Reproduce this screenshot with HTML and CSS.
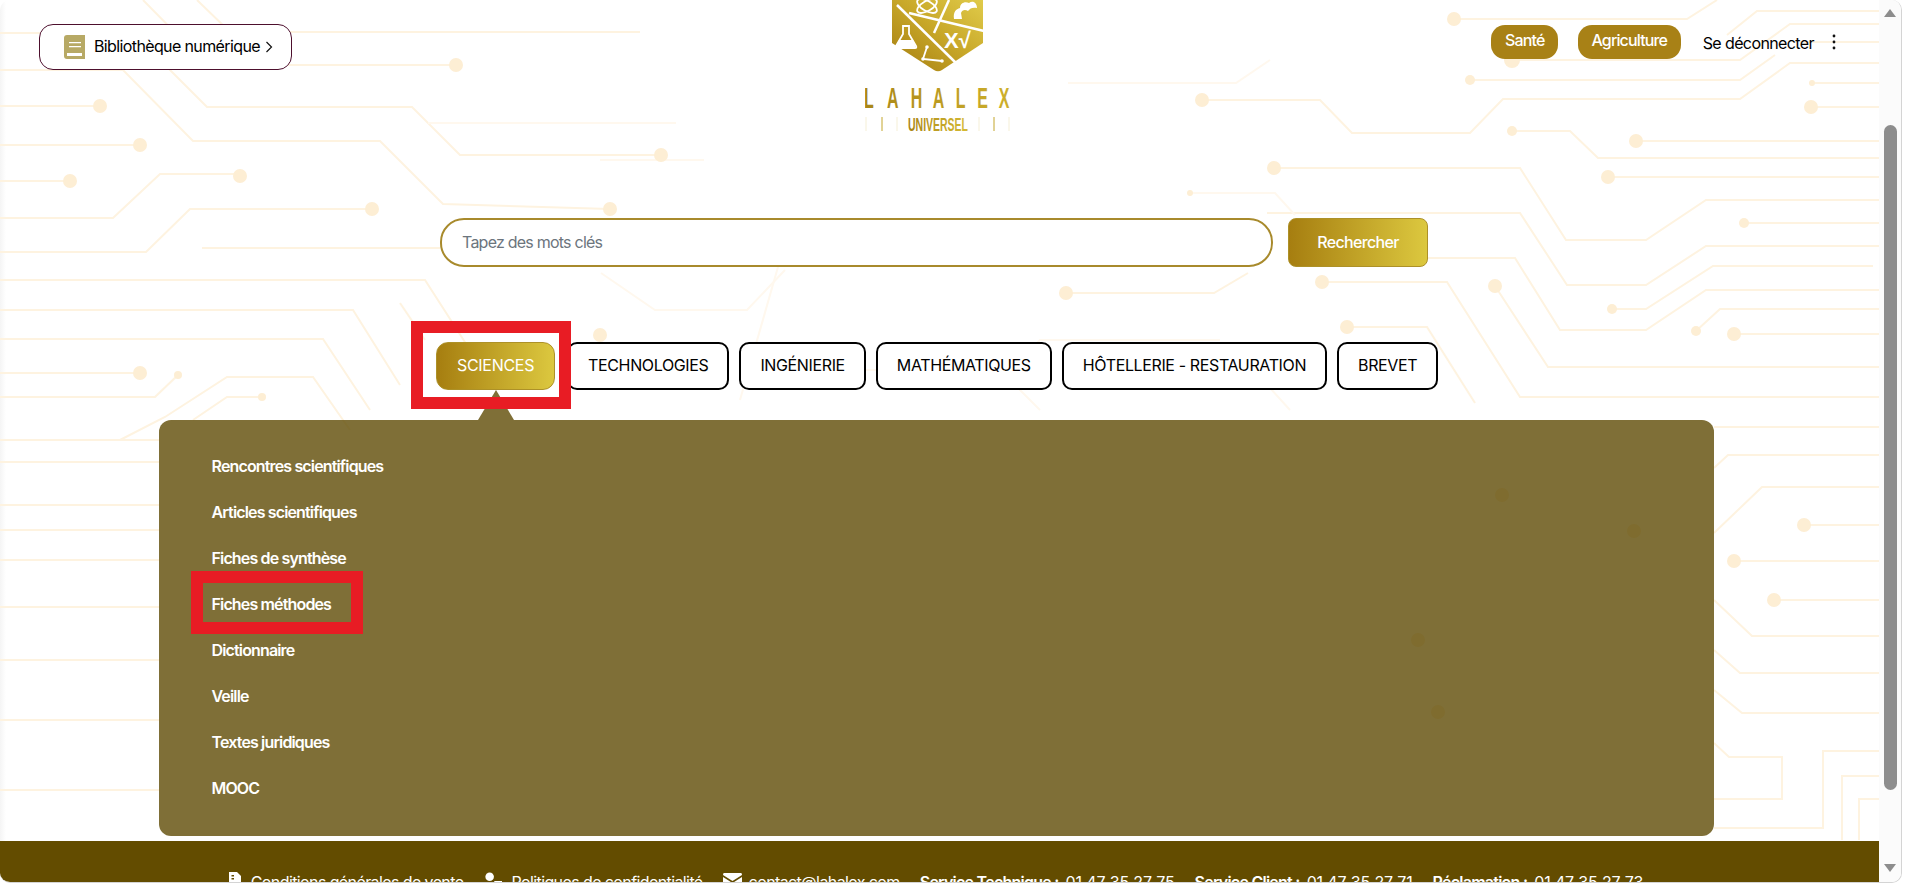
FILE: index.html

```html
<!DOCTYPE html>
<html lang="fr">
<head>
  <meta charset="UTF-8" />
  <meta name="viewport" content="width=device-width, initial-scale=1.0"/>
  <title>Lahalex Universel</title>
  <link rel="stylesheet" href="styles.css">
</head>
<body>
  <div class="window">
    <div class="page">
      <svg class="circuit" viewBox="0 0 1879 882" aria-hidden="true">
        <g class="traces">
          <path d="M0 33H135L143 41"/>
          <path d="M143 0L207 65H456"/>
          <path d="M197 0L230 32H640"/>
          <path d="M0 70H123L193 141H380L443 204L610 209"/>
          <path d="M165 65L207 107H412L460 155H661"/>
          <path d="M0 106H100"/>
          <path d="M0 145H140"/>
          <path d="M0 181H70"/>
          <path d="M0 218H113L160 174H240"/>
          <path d="M0 252H146L190 209H372"/>
          <path d="M202 248H440"/>
          <path d="M0 280H425L470 350"/>
          <path d="M0 310H353L400 385"/>
          <path d="M0 339H323L370 410"/>
          <path d="M400 303L425 340"/>
          <path d="M0 373H140"/>
          <path d="M178 375L155 397H0"/>
          <path d="M120 440L165 417L227 377H313L350 430"/>
          <path d="M193 420L227 397H262"/>
          <path d="M0 440H159M0 462H159M0 505H159M0 530H159M0 560H159M0 607H159M0 660H159M0 720H159M0 790H159"/>
          <path d="M1454 19H1687L1717 0"/>
          <path d="M1727 35L1757 11H1880"/>
          <path d="M1512 60H1740L1790 24H1880"/>
          <path d="M1800 42H1880"/>
          <path d="M1202 100H1320L1352 133H1470L1503 99H1740L1790 63H1880"/>
          <path d="M1470 80H1740L1775 55"/>
          <path d="M1811 107H1880"/>
          <path d="M1812 83H1880"/>
          <path d="M1512 131H1570L1598 158H1880"/>
          <path d="M1636 141H1880"/>
          <path d="M1608 177H1880"/>
          <path d="M1274 168H1520L1566 240H1646L1706 200H1880"/>
          <path d="M1267 213H1520L1567 285H1646L1706 246H1880"/>
          <path d="M1428 258H1515L1560 330H1646L1706 290H1880"/>
          <path d="M1612 309H1646L1713 266H1873"/>
          <path d="M1744 223H1880"/>
          <path d="M1322 282H1447L1520 397H1880"/>
          <path d="M1495 286L1548 367H1880"/>
          <path d="M1347 327H1427L1475 403"/>
          <path d="M1696 331L1720 309H1880"/>
          <path d="M1734 334H1880"/>
          <path d="M1714 427H1880"/>
          <path d="M1714 468L1728 455H1880"/>
          <path d="M1714 533L1762 487H1880"/>
          <path d="M1804 525H1880"/>
          <path d="M1734 561H1880"/>
          <path d="M1774 600H1880"/>
          <path d="M1714 600L1752 636H1880"/>
          <path d="M1714 650L1740 673H1880"/>
          <path d="M1714 690L1742 713H1880"/>
          <path d="M1714 743L1729 757H1782V799H1714"/>
          <path d="M1714 828H1823V751H1880"/>
          <path d="M1842 840V776H1880"/>
          <path d="M1859 840V799H1880"/>
          <path d="M1066 293H1214L1248 273"/>
        </g>
        <g class="traces faint">
          <path d="M428 123H676"/>
          <path d="M1068 83H1236L1270 60"/>
          <path d="M600 160H704"/>
          <path d="M601 273L655 310H747L785 270"/>
          <path d="M780 260L740 400"/>
          <path d="M1190 193H1275L1295 215"/>
          <path d="M820 370H1000L1040 410"/>
          <path d="M1100 355H1240L1290 410"/>
          <path d="M1000 380L1040 340H1220"/>
        </g>
        <g class="pads">
          <circle cx="456" cy="65" r="7"/><circle cx="100" cy="106" r="7"/>
          <circle cx="140" cy="145" r="7"/><circle cx="70" cy="181" r="7"/>
          <circle cx="240" cy="176" r="7"/><circle cx="372" cy="209" r="7"/>
          <circle cx="140" cy="373" r="7"/><circle cx="178" cy="375" r="4"/>
          <circle cx="262" cy="397" r="4"/><circle cx="661" cy="155" r="7"/>
          <circle cx="610" cy="209" r="7"/><circle cx="600" cy="335" r="7"/>
          <circle cx="1454" cy="19" r="7"/><circle cx="1512" cy="60" r="8"/>
          <circle cx="1470" cy="80" r="5"/><circle cx="1811" cy="107" r="7"/>
          <circle cx="1812" cy="83" r="3"/><circle cx="1512" cy="131" r="5"/>
          <circle cx="1636" cy="141" r="7"/><circle cx="1608" cy="177" r="7"/>
          <circle cx="1744" cy="223" r="5"/><circle cx="1202" cy="100" r="7"/>
          <circle cx="1274" cy="168" r="7"/><circle cx="1066" cy="293" r="7"/>
          <circle cx="1322" cy="282" r="7"/><circle cx="1347" cy="327" r="7"/>
          <circle cx="1495" cy="286" r="7"/><circle cx="1612" cy="309" r="5"/>
          <circle cx="1696" cy="331" r="5"/><circle cx="1734" cy="334" r="7"/>
          <circle cx="1804" cy="525" r="7"/><circle cx="1734" cy="561" r="7"/>
          <circle cx="1774" cy="600" r="7"/><circle cx="1190" cy="193" r="3"/>
          <circle cx="1502" cy="495" r="7"/><circle cx="1634" cy="531" r="7"/>
          <circle cx="1418" cy="640" r="7"/><circle cx="1438" cy="712" r="7"/>
        </g>
      </svg>

      <header class="topbar">
        <div class="topbar-left">
          <a class="library-link" href="#">
            <svg class="book-icon" viewBox="0 0 21 24" aria-hidden="true">
              <path fill="#b7a965" d="M3 0H21V24H3Q0 24 0 21V3Q0 0 3 0Z"/>
              <path fill="#fff" d="M5 7H17V8.200H5ZM5 11H17V12.200H5ZM3 18H18V21H3Z"/>
            </svg>
            <span class="library-label">Bibliothèque numérique</span>
            <svg class="chevron" viewBox="0 0 8 12" aria-hidden="true"><path d="M1.500 1L6.500 6L1.500 11"/></svg>
          </a>
        </div>

        <svg class="logo" viewBox="0 0 146 131" role="img" aria-label="Lahalex Universel">
          <defs>
            <linearGradient id="goldShield" x1="0" y1="1" x2="1" y2="0">
              <stop offset="0" stop-color="#a47c10"/>
              <stop offset=".55" stop-color="#c9a92a"/>
              <stop offset="1" stop-color="#e0cb4a"/>
            </linearGradient>
            <linearGradient id="goldText" gradientUnits="userSpaceOnUse" x1="0" y1="0" x2="260" y2="0">
              <stop offset="0" stop-color="#a98618"/>
              <stop offset="1" stop-color="#cdaf2c"/>
            </linearGradient>
            <linearGradient id="goldSub" x1="0" y1="0" x2="1" y2="0">
              <stop offset="0" stop-color="#a88416"/>
              <stop offset="1" stop-color="#d6bb35"/>
            </linearGradient>
          </defs>
          <path fill="url(#goldShield)" d="M27 0H118V43L77 70Q73 72.500 69 70L27 43Z"/>
          <g class="shield-lines">
            <path d="M32 5L91 63"/>
            <path d="M44 13L119 31"/>
            <path d="M84 0L69 33"/>
          </g>
          <g class="shield-icons">
            <ellipse cx="62" cy="6" rx="11" ry="5" transform="rotate(30 62 6)"/>
            <ellipse cx="62" cy="6" rx="11" ry="5" transform="rotate(-30 62 6)"/>
            <path d="M38 26H44V34L51 46Q52 48 50 48H32Q30 48 31 46L38 34Z"/>
            <path d="M62 47L58 59L77 61"/>
          </g>
          <path class="shield-gear" d="M89 19C88 12 91 9 95 8C95 3 100 1 104 3C108 0 112 3 112 8C108 7 105 8 103 11C100 9 97 10 96 13L97 19Z"/>
          <path fill="#fff" d="M34 40H48L51 48H31Z"/>
          <circle class="shield-dot" cx="62" cy="47" r="1.800"/>
          <circle class="shield-dot" cx="58" cy="59" r="1.800"/>
          <circle class="shield-dot" cx="77" cy="61" r="1.800"/>
          <text class="shield-math" x="79" y="48">X√</text>
          <g transform="scale(.55 1)">
            <text class="logo-name" x="-2 40 83 123 165 204 243" y="108" fill="url(#goldText)">LAHALEX</text>
          </g>
          <text class="logo-sub" x="43" y="131" textLength="60" lengthAdjust="spacingAndGlyphs" fill="url(#goldSub)">UNIVERSEL</text>
          <path class="tick" d="M17 117V131M129 117V131"/>
          <path class="tick pale" d="M1 117V131M32 117V131M114 117V131M144 117V131"/>
        </svg>

        <nav class="topbar-right">
          <a class="pill" href="#">Santé</a>
          <a class="pill" href="#">Agriculture</a>
          <a class="logout" href="#">Se déconnecter</a>
          <svg class="kebab" viewBox="0 0 4 16" aria-hidden="true">
            <circle cx="2" cy="2" r="1.400"/><circle cx="2" cy="8" r="1.400"/><circle cx="2" cy="14" r="1.400"/>
          </svg>
        </nav>
      </header>

      <section class="search-row">
        <input class="search-input" type="text" placeholder="Tapez des mots clés">
        <button class="search-button" type="button">Rechercher</button>
      </section>

      <nav class="tabs">
        <a class="tab active" href="#">SCIENCES<span class="mark mark-tab"></span></a>
        <a class="tab" href="#">TECHNOLOGIES</a>
        <a class="tab" href="#">INGÉNIERIE</a>
        <a class="tab" href="#">MATHÉMATIQUES</a>
        <a class="tab" href="#">HÔTELLERIE - RESTAURATION</a>
        <a class="tab" href="#">BREVET</a>
      </nav>

      <section class="menu-panel">
        <a class="menu-item" href="#">Rencontres scientifiques</a>
        <a class="menu-item" href="#">Articles scientifiques</a>
        <a class="menu-item" href="#">Fiches de synthèse</a>
        <a class="menu-item" href="#">Fiches méthodes<span class="mark mark-item"></span></a>
        <a class="menu-item" href="#">Dictionnaire</a>
        <a class="menu-item" href="#">Veille</a>
        <a class="menu-item" href="#">Textes juridiques</a>
        <a class="menu-item" href="#">MOOC</a>
      </section>

      <footer class="site-footer">
        <span class="foot-item roomy">
          <svg class="foot-icon" viewBox="0 0 14 18" aria-hidden="true"><path d="M1 0H9L13 4V18H1ZM3.500 6V7.500H6V6ZM3.500 3V4.500H6V3Z" fill-rule="evenodd"/></svg>
          Conditions générales de vente
        </span>
        <span class="foot-item roomy">
          <svg class="foot-icon wide" viewBox="0 0 20 18" aria-hidden="true"><circle cx="7" cy="4.500" r="4.500"/><path d="M0 18C0 12 3 10 7 10C9 10 10 11 11 12L9 18ZM12 9H20V18H10Z"/></svg>
          Politiques de confidentialité
        </span>
        <span class="foot-item">
          <svg class="foot-icon wide" viewBox="0 0 19 16" aria-hidden="true"><path d="M1 0H18Q19 0 19 2L9.500 8L0 2Q0 0 1 0ZM0 4L9.500 10L19 4V16H0Z"/></svg>
          contact@lahalex.com
        </span>
        <span class="foot-item"><b>Service Technique :</b> <span class="foot-num">01 47 35 27 75</span></span>
        <span class="foot-item"><b>Service Client :</b> <span class="foot-num">01 47 35 27 71</span></span>
        <span class="foot-item"><b>Réclamation :</b> <span class="foot-num">01 47 35 27 73</span></span>
      </footer>
    </div>

    <div class="scrollbar">
      <span class="arrow arrow-up"></span>
      <span class="thumb"></span>
      <span class="arrow arrow-down"></span>
    </div>
  </div>
</body>
</html>
```

FILE: styles.css

```css
* {
  box-sizing: border-box;
}
html, body {
  margin: 0;
  height: 100%;
  overflow: hidden;
  background-color: #fff;
}
body {
  font-family: Inter, "Liberation Sans", sans-serif;
  font-size: 16px;
  color: #000;
}
a {
  color: inherit;
  text-decoration: none;
}

.window {
  display: flex;
  width: 1902px;
  height: 883px;
  border-right: 1px solid #d4d4d4;
  border-bottom: 1px solid #d4d4d4;
  border-radius: 10px;
  overflow: hidden;
}
.page {
  position: relative;
  width: 1879px;
  height: 882px;
  overflow: hidden;
  background: linear-gradient(to right, #f5f5f5, #fff 6px);
}
.circuit {
  position: absolute;
  top: 0;
  left: 0;
  width: 1879px;
  height: 882px;
}
.traces path {
  fill: none;
  stroke: #fef3e0;
  stroke-width: 2;
}
.traces.faint path {
  stroke: #fff8ee;
}
.pads circle {
  fill: #fdeed4;
}

/* top bar */
.topbar {
  position: relative;
  display: grid;
  grid-template-columns: 1fr 146px 1fr;
  align-items: start;
  height: 218px;
  padding: 0 43px 0 39px;
}
.library-link {
  display: inline-flex;
  align-items: center;
  width: 253px;
  height: 46px;
  margin-top: 24px;
  padding-left: 24px;
  background-color: #fff;
  border: 1px solid #4d0f2d;
  border-radius: 14px;
  letter-spacing: -0.62px;
}
.library-label {
  padding-bottom: 2px;
}
.book-icon {
  width: 21px;
  height: 24px;
  margin-right: 9px;
}
.chevron {
  width: 8px;
  height: 12px;
  margin-left: 5px;
  fill: none;
  stroke: #111;
  stroke-width: 1.2;
}
.logo {
  display: block;
  width: 146px;
  height: 131px;
}
.shield-lines path {
  fill: none;
  stroke: #fff;
  stroke-width: 2.5;
}
.shield-icons > * {
  fill: none;
  stroke: #fff;
  stroke-width: 1.8;
}
.shield-gear,
.shield-dot {
  fill: #fff;
}
.shield-math {
  font-family: "Liberation Sans", sans-serif;
  font-size: 22px;
  font-weight: 700;
  fill: #fff;
}
.logo-name {
  font-family: "Liberation Sans", sans-serif;
  font-size: 29px;
  font-weight: 700;
}
.logo-sub {
  font-family: "Liberation Sans", sans-serif;
  font-size: 19px;
  font-weight: 700;
}
.tick {
  fill: none;
  stroke: #c3a62c;
  stroke-width: 1;
}
.tick.pale {
  stroke: #f5efd6;
}
.topbar-right {
  display: flex;
  align-items: center;
  justify-content: flex-end;
  margin-top: 25px;
}
.pill {
  display: flex;
  align-items: center;
  justify-content: center;
  height: 34px;
  margin-right: 20px;
  padding: 0 13.500px 4px;
  background-color: #a88116;
  border-radius: 14px;
  color: #fff;
  font-weight: 500;
  letter-spacing: -0.85px;
}
.pill + .logout {
  margin-left: 2px;
}
.logout {
  margin-right: 18px;
  padding-top: 2px;
  letter-spacing: -0.6px;
}
.kebab {
  width: 4px;
  height: 16px;
  fill: #111;
}

/* search */
.search-row {
  position: relative;
  display: flex;
  gap: 15px;
  height: 49px;
  margin-left: 440px;
}
.search-input {
  width: 833px;
  height: 49px;
  padding: 0 20px 2px;
  background-color: #fff;
  border: 2px solid #a88a2c;
  border-radius: 24px;
  font-family: inherit;
  font-size: 16px;
  letter-spacing: -0.77px;
}
.search-input::placeholder {
  color: #6c757d;
  opacity: 1;
}
.search-button {
  width: 140px;
  height: 49px;
  padding-bottom: 2px;
  background: linear-gradient(to right, #a67e10, #dcc83f);
  border: 1px solid #ad9128;
  border-radius: 8px;
  color: #fff;
  font-family: inherit;
  font-size: 16px;
  font-weight: 500;
  letter-spacing: -0.66px;
}

/* tabs */
.tabs {
  position: relative;
  z-index: 2;
  display: flex;
  gap: 10px;
  height: 48px;
  margin: 75px 0 0 436px;
}
.tab {
  position: relative;
  display: flex;
  align-items: center;
  padding: 0 19px 2px;
  background-color: #fff;
  border: 2px solid #000;
  border-radius: 10px;
  letter-spacing: -0.37px;
}
.tab.active {
  z-index: 1;
  margin-right: 2px;
  padding: 0 20px 2px;
  background: linear-gradient(to right, #a67e10, #dcc83f);
  border: 1px solid #ad9128;
  border-radius: 12px;
  color: #fff;
  letter-spacing: -0.3px;
}
/* red annotation frames */
.mark {
  position: absolute;
  border: 12px solid #e81c24;
  pointer-events: none;
}
.mark-tab {
  top: -22px;
  left: -26px;
  width: 160px;
  height: 88px;
}
.mark-item {
  top: -10px;
  left: -21px;
  width: 172px;
  height: 63px;
}

/* dropdown */
.menu-panel {
  position: relative;
  display: flex;
  flex-direction: column;
  align-items: flex-start;
  width: 1555px;
  height: 416px;
  margin: 30px 0 0 159px;
  padding: 23px 0 0 52.500px;
  background-color: rgba(95, 75, 5, 0.8);
  border-radius: 12px;
}
.menu-panel::before {
  content: "";
  position: absolute;
  top: -30px;
  left: 319px;
  border-left: 18px solid transparent;
  border-right: 18px solid transparent;
  border-bottom: 30px solid rgba(95, 75, 5, 0.8);
}
.menu-item {
  position: relative;
  height: 46px;
  line-height: 46px;
  color: #fff;
  font-weight: 600;
  letter-spacing: -0.85px;
}

/* footer */
.site-footer {
  display: flex;
  justify-content: center;
  gap: 20px;
  height: 41px;
  margin-top: 5px;
  padding: 31px 8px 0 0;
  background-color: #634c00;
  color: #fff;
  line-height: 20px;
  white-space: nowrap;
  letter-spacing: -0.6px;
}
.foot-item {
  display: flex;
  gap: 7px;
}
.foot-item.roomy {
  gap: 9px;
}
.foot-item b {
  font-weight: 600;
  letter-spacing: -0.75px;
}
.foot-num {
  letter-spacing: -0.15px;
}
.foot-icon {
  width: 14px;
  height: 18px;
  fill: #fff;
}
.foot-icon.wide {
  width: 19px;
}

/* scrollbar */
.scrollbar {
  display: flex;
  flex-direction: column;
  align-items: center;
  width: 22px;
  height: 882px;
  padding-top: 9px;
  background-color: #fbfbfb;
}
.arrow {
  width: 0;
  height: 0;
  border-left: 6px solid transparent;
  border-right: 6px solid transparent;
}
.arrow-up {
  border-bottom: 8px solid #8d8d8d;
}
.arrow-down {
  margin-top: 74px;
  border-top: 8px solid #8d8d8d;
}
.thumb {
  width: 13px;
  height: 665px;
  margin-top: 108px;
  background-color: #8d8d8d;
  border-radius: 7px;
}
```
